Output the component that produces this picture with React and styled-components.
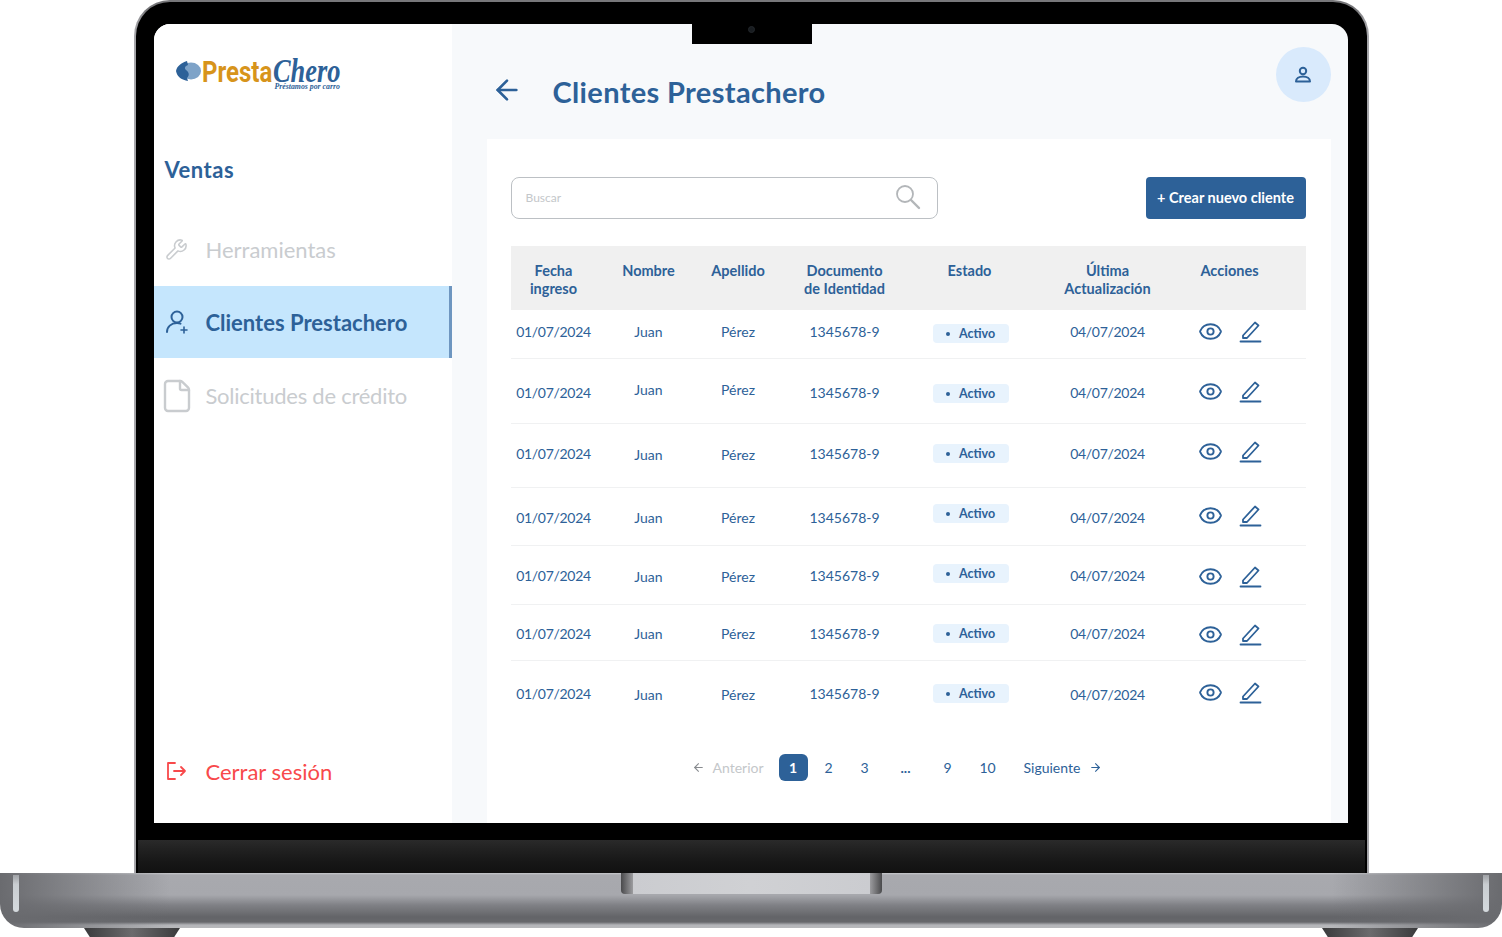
import React from 'react';
import styled, { createGlobalStyle } from 'styled-components';
import { ArrowLeft, ArrowRight, Eye, File, Wrench } from 'lucide-react';

const blue = '#2d6198';

const GlobalStyle = createGlobalStyle`
  html, body { margin: 0; padding: 0; background: #fff; }
  body { font-family: "Lato", "Noto Sans", sans-serif; color: ${blue}; }
  * { box-sizing: border-box; }
`;

const Page = styled.div`
  width: 1502px;
  height: 937px;
  overflow: hidden;
  display: flex;
  flex-direction: column;
  align-items: center;
`;

const Lid = styled.div`
  width: 1235px;
  height: 873px;
  padding: 2px 2px 0;
  border-radius: 36px 36px 0 0;
  background: linear-gradient(90deg, #a9a9ad, #77777a 1%, #77777a 99%, #a9a9ad);
`;

const Bezel = styled.div`
  height: 871px;
  padding: 22px 18px 0;
  border-radius: 34px 34px 0 0;
  background: #000;
  position: relative;
`;

const Notch = styled.div`
  position: absolute;
  top: 22px;
  left: 556px;
  width: 120px;
  height: 20px;
  background: #000;
  display: flex;
  justify-content: center;
  padding-top: 2px;
`;

const Camera = styled.span`
  width: 7px;
  height: 7px;
  border-radius: 50%;
  background: #181c20;
  border: 1px solid #23272b;
`;

const Screen = styled.div`
  width: 1194px;
  height: 799px;
  display: flex;
  overflow: hidden;
  border-radius: 16px 16px 0 0;
  background: #f7f9fb;
`;

const Chin = styled.div`
  height: 33px;
  margin: 17px -16px 0;
  background: linear-gradient(180deg, #2a2a2a, #222 25%, #161616 70%, #111);
`;

const Base = styled.div`
  width: 1502px;
  height: 55px;
  flex: none;
  position: relative;
  border-radius: 0 0 24px 24px;
  background:
    linear-gradient(90deg, #6a6b6f 0, rgba(106,107,111,0) 170px, rgba(106,107,111,0) 1332px, #6a6b6f 1502px),
    linear-gradient(180deg, #c9cacd 0, #a8a9ae 2px, #a7a8ad 22px, #808186 32px, #636468 44px, #67686c 49px, #b4b5b9 52px, #b8b9bc 55px);
`;

const Highlight = styled.span`
  position: absolute;
  top: 2px;
  width: 6px;
  height: 37px;
  border-radius: 0 0 4px 4px;
  background: linear-gradient(180deg, #9fa1a5, #c9cdd1 25%, #d5dade);
  ${p => (p.$side === 'left' ? 'left: 13px;' : 'right: 13px;')}
`;

const Hinge = styled.div`
  width: 261px;
  height: 21px;
  margin: 0 auto;
  border-radius: 0 0 4px 4px;
  background: linear-gradient(90deg, #4a4a4c, #9a9a9d 4.500%, #cbccd0 4.600%, #d0d1d4 50%, #cbccd0 95.400%, #9a9a9d 95.500%, #4a4a4c);
`;

const Feet = styled.div`
  width: 1502px;
  height: 9px;
  flex: none;
  display: flex;
  justify-content: space-between;
  padding: 0 84px;
`;

const Foot = styled.span`
  width: 96px;
  height: 9px;
  background: linear-gradient(90deg, #3a3a3c, #6b6b6d 50%, #3a3a3c);
  clip-path: polygon(0 0, 100% 0, 94% 100%, 6% 100%);
`;

const Sidebar = styled.aside`
  width: 298px;
  flex: none;
  background: #fff;
  display: flex;
  flex-direction: column;
  padding-top: 30px;
`;

const Logo = styled.div`
  height: 42px;
  display: flex;
  align-items: flex-start;
  padding-left: 22px;
  position: relative;
`;

const LogoPresta = styled.span`
  font: 700 30px/36px "Roboto", sans-serif;
  color: #d7941b;
  display: inline-block;
  width: 71px;
  transform: scaleX(0.8);
  transform-origin: left center;
  white-space: nowrap;
`;

const LogoChero = styled.span`
  font: italic 700 33px/24px "Liberation Serif", serif;
  color: ${blue};
  display: inline-block;
  margin-top: 5px;
  transform: scaleX(0.8);
  transform-origin: left center;
  white-space: nowrap;
`;

const LogoTag = styled.span`
  position: absolute;
  left: 121px;
  top: 29px;
  font: italic 700 7.800px/8px "Liberation Serif", serif;
  color: ${blue};
  white-space: nowrap;
`;

const SectionTitle = styled.h2`
  margin: 60px 0 0 11px;
  font-size: 22px;
  line-height: 28px;
  font-weight: 700;
  letter-spacing: 0.5px;
`;

const NavList = styled.nav`
  margin-top: 29px;
  display: flex;
  flex-direction: column;
  flex: 1;
`;

const NavItem = styled.div`
  height: ${p => p.$h}px;
  display: flex;
  align-items: center;
  gap: 17px;
  padding-left: 11px;
  font-size: 22px;
  letter-spacing: ${p => p.$spacing || 0}px;
  font-weight: ${p => (p.$active ? 700 : 400)};
  color: ${p => (p.$active ? blue : '#c9cccf')};
  background: ${p => (p.$active ? '#c5e6fd' : 'transparent')};
  border-right: ${p => (p.$active ? '3px solid #6e96c0' : '0')};
  white-space: nowrap;
`;

const IconSlot = styled.span`
  width: 24px;
  height: 28px;
  flex: none;
  display: flex;
  align-items: center;
  justify-content: center;

  svg { flex: none; }
`;

const Logout = styled(NavItem)`
  margin-top: auto;
  margin-bottom: 32px;
  color: #f8494b;
`;

const Main = styled.main`
  flex: 1;
  min-width: 0;
  padding: 0 17px 0 35px;
  display: flex;
  flex-direction: column;
`;

const Header = styled.header`
  height: 115px;
  flex: none;
  display: flex;
  align-items: flex-start;
`;

const Back = styled.span`
  margin: 50px 0 0 4px;
  width: 32px;
  height: 32px;
  display: flex;
`;

const Title = styled.h1`
  margin: 49px 0 0 30px;
  font-size: 29px;
  line-height: 38px;
  font-weight: 700;
  letter-spacing: 0.35px;
  white-space: nowrap;
`;

const Avatar = styled.span`
  margin: 23px 0 0 auto;
  width: 55px;
  height: 55px;
  border-radius: 50%;
  background: #d9eafc;
  display: flex;
  align-items: center;
  justify-content: center;
`;

const Card = styled.section`
  flex: 1;
  background: #fff;
  padding: 38px 25px 0 24px;
`;

const Toolbar = styled.div`
  display: flex;
  justify-content: space-between;
  height: 42px;
`;

const SearchBox = styled.div`
  width: 427px;
  display: flex;
  align-items: center;
  justify-content: space-between;
  padding: 0 16px 2px 14px;
  border: 1px solid #bcc0c4;
  border-radius: 8px;
  font-size: 12px;
  color: #c4c7ca;
`;

const CreateButton = styled.button`
  width: 160px;
  border: 0;
  border-radius: 4px;
  background: ${blue};
  color: #fff;
  font: 700 14.500px "Lato", sans-serif;
  padding: 0 0 2px;
`;

const columns = '86px 104px 75px 138px 112px 164px 80px 36px';

const TableHead = styled.div`
  margin-top: 27px;
  height: 64px;
  display: grid;
  grid-template-columns: ${columns};
  background: #f0f0f0;
  font-size: 14.500px;
  font-weight: 700;
  line-height: 18px;
  text-align: center;
  padding-top: 16px;
`;

const Row = styled.div`
  height: ${p => p.$h}px;
  display: grid;
  grid-template-columns: ${columns};
  border-bottom: ${p => (p.$last ? '0' : '1px solid #f0f1f2')};
  font-size: 14px;
  line-height: 20px;
  text-align: center;
`;

const Cell = styled.div`
  padding-top: ${p => p.$top}px;
`;

const DateCell = styled(Cell)`
  letter-spacing: -0.3px;
`;

const Badge = styled.span`
  display: flex;
  align-items: center;
  justify-content: center;
  gap: 9px;
  width: 76px;
  height: 19px;
  margin-left: 19px;
  border-radius: 4px;
  background: #e8f3fd;
  font-size: 12.500px;
  font-weight: 700;
  line-height: 19px;
`;

const Dot = styled.i`
  width: 4px;
  height: 4px;
  border-radius: 50%;
  background: ${blue};
`;

const Actions = styled.div`
  display: flex;
  align-items: center;
  gap: 16px;
  height: 24px;
  padding-left: 8px;
`;

const Pagination = styled.div`
  margin: 29px 0 0 181px;
  height: 27px;
  display: flex;
  align-items: center;
  font-size: 14px;
`;

const PrevNext = styled.span`
  display: flex;
  align-items: center;
  gap: ${p => p.$gap}px;
  color: ${p => (p.$off ? '#c4c7ca' : blue)};
  margin-left: ${p => p.$ml || 0}px;
  margin-right: ${p => p.$mr || 0}px;
  white-space: nowrap;
`;

const PageNum = styled.span`
  width: ${p => p.$w}px;
  height: 27px;
  display: flex;
  align-items: center;
  justify-content: center;
  border-radius: 6px;
  background: ${p => (p.$current ? blue : 'transparent')};
  color: ${p => (p.$current ? '#fff' : blue)};
  font-weight: ${p => (p.$current || p.$bold ? 700 : 400)};
`;

const rows = [
  { h: 49, date: 12, name: 12, doc: 12, badge: 14, last: 12, act: 9 },
  { h: 65, date: 24, name: 21, doc: 24, badge: 25, last: 24, act: 20 },
  { h: 64, date: 20, name: 21, doc: 20, badge: 20, last: 20, act: 15 },
  { h: 58, date: 20, name: 20, doc: 20, badge: 16, last: 20, act: 15 },
  { h: 59, date: 20, name: 21, doc: 20, badge: 18, last: 20, act: 18 },
  { h: 56, date: 19, name: 19, doc: 19, badge: 19, last: 19, act: 17 },
  { h: 64, date: 23, name: 24, doc: 23, badge: 23, last: 24, act: 19 },
];

function LogoMark() {
  return (
    <svg width="26" height="22" viewBox="0 0 26 22" style={{ marginTop: 6, flex: 'none' }}>
      <ellipse cx="15" cy="11" rx="10" ry="8.500" fill="#7ea3c8" />
      <path d="M0 11C1 6 5 3 11 1l1 4c-3 1-4 3-2 5 4 3 3 6 1 8l1 3C6 20 1 17 0 11z" fill={blue} />
    </svg>
  );
}

function SearchIcon() {
  return (
    <svg width="26" height="26" viewBox="0 0 26 26" fill="none" stroke="#b3b6b9" strokeWidth="1.800" strokeLinecap="round">
      <circle cx="10" cy="10" r="8" />
      <path d="M16 16l8 8" strokeWidth="2.400" />
    </svg>
  );
}

function UserPlusIcon() {
  return (
    <svg width="24" height="26" viewBox="0 0 24 26" fill="none" stroke={blue} strokeWidth="2" strokeLinecap="round">
      <circle cx="12" cy="8" r="5.500" />
      <path d="M2 23c0-5 4-9 10-9 1.500 0 2.500.2 3.500.6" />
      <path d="M19 18v6M16 21h6" strokeWidth="1.600" />
    </svg>
  );
}

function LogoutIcon() {
  return (
    <svg width="22" height="20" viewBox="0 0 22 20" fill="none" stroke="#f8494b" strokeWidth="1.800" strokeLinecap="round" strokeLinejoin="round">
      <path d="M9 2H2v16h7" />
      <path d="M8 10h11M15 6l4 4-4 4" />
    </svg>
  );
}

function PersonIcon() {
  return (
    <svg width="18" height="18" viewBox="0 0 18 18" fill="none" stroke={blue} strokeWidth="2" strokeLinejoin="round">
      <circle cx="9" cy="5" r="3.200" />
      <path d="M2 15.500c0-3 3-5 7-5s7 2 7 5z" />
    </svg>
  );
}

function PencilIcon() {
  return (
    <svg width="24" height="24" viewBox="0 0 24 24" fill="none" stroke={blue} strokeWidth="1.800" strokeLinejoin="round" strokeLinecap="round" style={{ flex: 'none' }}>
      <path d="M4 16.500 16 3.500l3.500 3L8 19H4z" />
      <path d="M1.500 22.500h20" />
    </svg>
  );
}

export default function App() {
  return (
    <Page>
      <GlobalStyle />
      <Lid>
        <Bezel>
          <Notch><Camera /></Notch>
          <Screen>
            <Sidebar>
              <Logo>
                <LogoMark />
                <LogoPresta>Presta</LogoPresta>
                <LogoChero>Chero</LogoChero>
                <LogoTag>Préstamos por carro</LogoTag>
              </Logo>
              <SectionTitle>Ventas</SectionTitle>
              <NavList>
                <NavItem $h={73}>
                  <IconSlot><Wrench size={23} strokeWidth={1.6} /></IconSlot>
                  Herramientas
                </NavItem>
                <NavItem $h={72} $active>
                  <IconSlot><UserPlusIcon /></IconSlot>
                  Clientes Prestachero
                </NavItem>
                <NavItem $h={75} $spacing={-0.25}>
                  <IconSlot><File size={36} strokeWidth={1.600} /></IconSlot>
                  Solicitudes de crédito
                </NavItem>
                <Logout $h={40}>
                  <IconSlot><LogoutIcon /></IconSlot>
                  Cerrar sesión
                </Logout>
              </NavList>
            </Sidebar>
            <Main>
              <Header>
                <Back><ArrowLeft size={32} strokeWidth={2} /></Back>
                <Title>Clientes Prestachero</Title>
                <Avatar><PersonIcon /></Avatar>
              </Header>
              <Card>
                <Toolbar>
                  <SearchBox>
                    Buscar
                    <SearchIcon />
                  </SearchBox>
                  <CreateButton>+ Crear nuevo cliente</CreateButton>
                </Toolbar>
                <TableHead>
                  <div>Fecha<br />ingreso</div>
                  <div>Nombre</div>
                  <div>Apellido</div>
                  <div>Documento<br />de Identidad</div>
                  <div>Estado</div>
                  <div>Última<br />Actualización</div>
                  <div>Acciones</div>
                  <div />
                </TableHead>
                {rows.map((r, i) => (
                  <Row key={i} $h={r.h} $last={i === rows.length - 1}>
                    <DateCell $top={r.date}>01/07/2024</DateCell>
                    <Cell $top={r.name}>Juan</Cell>
                    <Cell $top={r.name}>Pérez</Cell>
                    <Cell $top={r.doc}>1345678-9</Cell>
                    <Cell $top={r.badge}><Badge><Dot />Activo</Badge></Cell>
                    <DateCell $top={r.last}>04/07/2024</DateCell>
                    <Cell $top={r.act}>
                      <Actions>
                        <Eye size={25} strokeWidth={1.800} />
                        <PencilIcon />
                      </Actions>
                    </Cell>
                    <div />
                  </Row>
                ))}
                <Pagination>
                  <PrevNext $off $gap={8} $mr={15}>
                    <ArrowLeft size={13} color="#888b8f" />
                    Anterior
                  </PrevNext>
                  <PageNum $w={29} $current>1</PageNum>
                  <PageNum $w={3} />
                  <PageNum $w={36}>2</PageNum>
                  <PageNum $w={36}>3</PageNum>
                  <PageNum $w={46} $bold>...</PageNum>
                  <PageNum $w={38}>9</PageNum>
                  <PageNum $w={42}>10</PageNum>
                  <PrevNext $gap={9} $ml={15}>
                    Siguiente
                    <ArrowRight size={13} />
                  </PrevNext>
                </Pagination>
              </Card>
            </Main>
          </Screen>
          <Chin />
        </Bezel>
      </Lid>
      <Base>
        <Highlight $side="left" />
        <Highlight $side="right" />
        <Hinge />
      </Base>
      <Feet>
        <Foot />
        <Foot />
      </Feet>
    </Page>
  );
}
